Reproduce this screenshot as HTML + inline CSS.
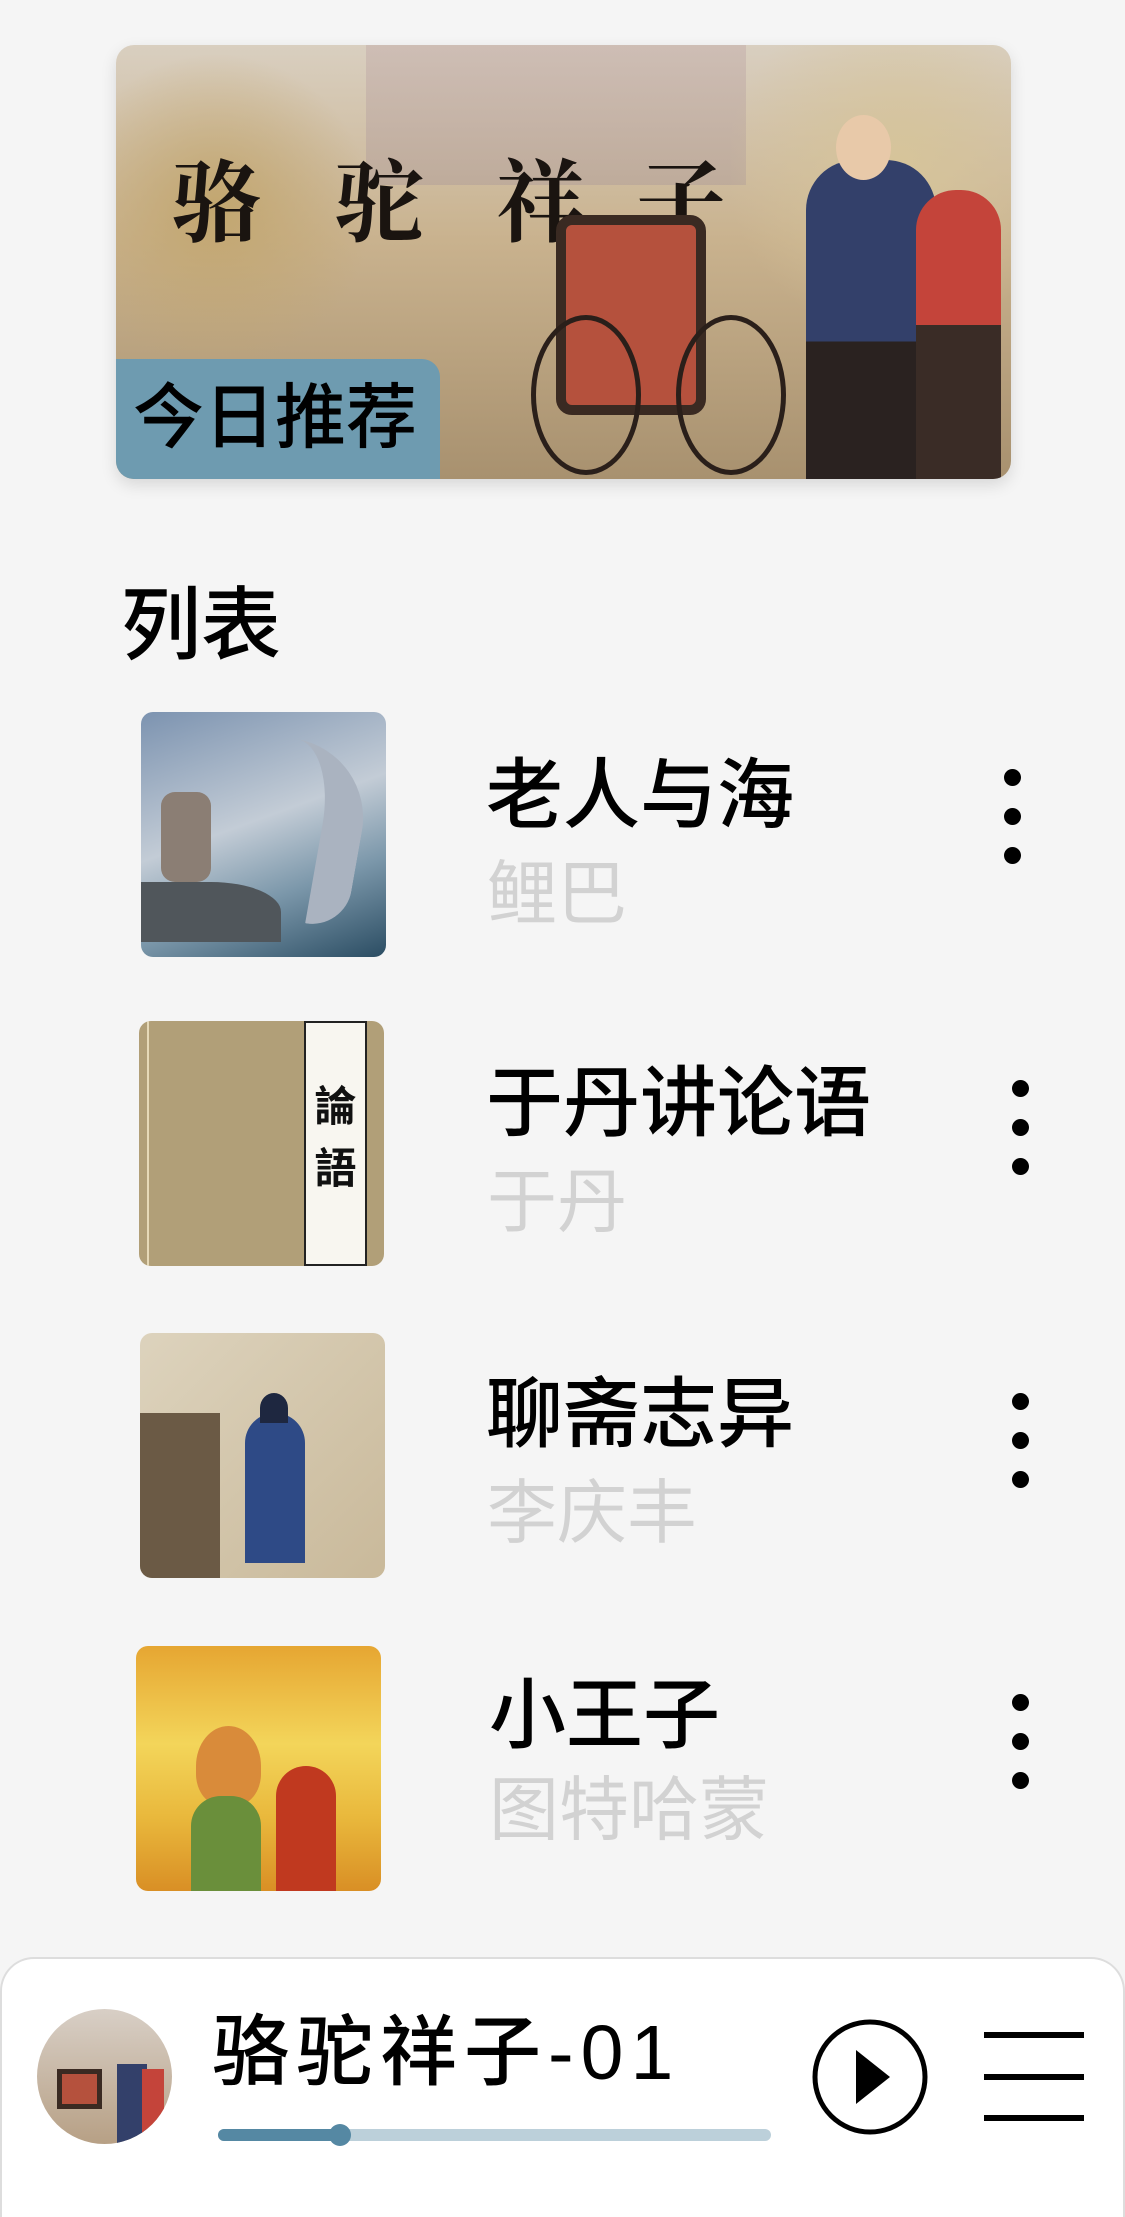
<!DOCTYPE html>
<html><head><meta charset="utf-8"><style>
*{margin:0;padding:0;box-sizing:border-box}
body{width:1125px;height:2209px;background:#f5f5f5;position:relative;overflow:hidden;font-family:"Liberation Sans","Noto Sans CJK SC",sans-serif}
.banner{position:absolute;left:116px;top:45px;width:895px;height:434px;border-radius:18px;overflow:hidden;box-shadow:0 6px 16px rgba(0,0,0,.12);background:linear-gradient(180deg,#d9cfc0 0%,#c9b28e 45%,#a8916f 100%)}
.badge{position:absolute;left:0;bottom:0;width:324px;height:120px;background:#6e9bb0;border-top-right-radius:18px;font-size:71px;line-height:120px;padding-left:17px;color:#000;font-weight:500}
.cal{position:absolute;top:85px;font-family:"Noto Serif CJK SC",serif;font-size:90px;color:#1a1410;font-weight:bold}
.h{position:absolute;left:121px;top:578px;font-size:80px;line-height:96px;color:#000;font-weight:500}
.thumb{position:absolute;width:245px;height:245px;border-radius:12px;overflow:hidden}
.t{position:absolute;left:486px;font-size:77px;line-height:86px;color:#000;font-weight:500}
.s{position:absolute;left:487px;font-size:70px;line-height:76px;color:#d2d2d2}
.dots{position:absolute;width:17px}
.dots i{display:block;width:17px;height:17px;border-radius:50%;background:#000;margin-bottom:22px}
.bar{position:absolute;left:0;top:1957px;width:1125px;height:260px;background:#fff;border:2px solid #ddd;border-bottom:none;border-radius:34px 34px 0 0}
</style></head><body>
<div class="banner">
  <div style="position:absolute;left:250px;top:0;width:380px;height:140px;background:linear-gradient(#c9b6b0,#b8a59a);opacity:.7"></div>
  <div style="position:absolute;left:0;top:0;width:250px;height:330px;background:radial-gradient(circle at 40% 50%,#c2a66f,transparent 70%)"></div>
  <div style="position:absolute;right:0;top:0;width:280px;height:300px;background:radial-gradient(circle at 60% 40%,#d6c49a,transparent 70%)"></div>
  <div class="cal" style="left:55px">骆</div><div class="cal" style="left:218px">驼</div><div class="cal" style="left:380px">祥</div><div class="cal" style="left:520px">子</div>
  <div style="position:absolute;left:440px;top:170px;width:150px;height:200px;background:#b5513d;border-radius:16px;border:10px solid #3a2a22"></div>
  <div style="position:absolute;left:415px;top:270px;width:110px;height:160px;border:5px solid #2a1f1a;border-radius:50%"></div>
  <div style="position:absolute;left:560px;top:270px;width:110px;height:160px;border:5px solid #2a1f1a;border-radius:50%"></div>
  <div style="position:absolute;left:690px;top:115px;width:130px;height:330px;background:linear-gradient(#33406a 0 55%,#2a2220 55%);border-radius:50px 50px 0 0"></div>
  <div style="position:absolute;left:720px;top:70px;width:55px;height:65px;background:#e8c9a9;border-radius:50%"></div>
  <div style="position:absolute;left:800px;top:145px;width:85px;height:300px;background:linear-gradient(#c4443a 0 45%,#3a2c26 45%);border-radius:40px 40px 0 0"></div>
  <div class="badge">今日推荐</div>
</div>
<div class="h">列表</div>

<div class="thumb" style="left:141px;top:712px;background:linear-gradient(160deg,#7c93b0 0%,#c3ccd6 45%,#7b97aa 70%,#2b4d63 100%)">
  <div style="position:absolute;left:110px;top:30px;width:110px;height:180px;border-right:40px solid #aab3c0;border-radius:0 80px 40px 0;transform:rotate(10deg)"></div>
  <div style="position:absolute;left:20px;top:80px;width:50px;height:90px;background:#8b7e74;border-radius:14px"></div>
  <div style="position:absolute;left:0;top:170px;width:140px;height:60px;background:#50565b;border-radius:0 50% 0 0"></div>
</div>
<div class="t" style="top:753px">老人与海</div><div class="s" style="top:856px">鲤巴</div>
<div class="dots" style="left:1004px;top:769px"><i></i><i></i><i></i></div>

<div class="thumb" style="left:139px;top:1021px;background:#b19f78">
  <div style="position:absolute;left:165px;top:0;width:63px;height:245px;background:#f8f6f0;border:2px solid #222;font-family:'Noto Sans CJK SC',sans-serif;font-weight:bold;font-size:42px;line-height:62px;text-align:center;padding-top:50px;color:#111">論<br>語</div>
  <div style="position:absolute;left:8px;top:0;width:2px;height:245px;background:#e6d9b8"></div>
</div>
<div class="t" style="top:1061px">于丹讲论语</div><div class="s" style="top:1164px">于丹</div>
<div class="dots" style="left:1012px;top:1080px"><i></i><i></i><i></i></div>

<div class="thumb" style="left:140px;top:1333px;background:linear-gradient(135deg,#ddd3bd,#c9b99a)">
  <div style="position:absolute;left:0;top:80px;width:80px;height:165px;background:#6b5a45"></div>
  <div style="position:absolute;left:105px;top:80px;width:60px;height:150px;background:#2e4a86;border-radius:30px 30px 0 0"></div>
  <div style="position:absolute;left:120px;top:60px;width:28px;height:30px;background:#1e2740;border-radius:50% 50% 0 0"></div>
</div>
<div class="t" style="top:1372px">聊斋志异</div><div class="s" style="top:1475px">李庆丰</div>
<div class="dots" style="left:1012px;top:1393px"><i></i><i></i><i></i></div>

<div class="thumb" style="left:136px;top:1646px;background:linear-gradient(180deg,#e6a632 0%,#f3d55a 40%,#e9b83c 70%,#d98f25 100%)">
  <div style="position:absolute;left:60px;top:80px;width:65px;height:80px;background:#d98b3a;border-radius:50% 50% 40% 40%"></div>
  <div style="position:absolute;left:55px;top:150px;width:70px;height:95px;background:#6a8f3b;border-radius:30px 30px 0 0"></div>
  <div style="position:absolute;left:140px;top:120px;width:60px;height:125px;background:#c0391f;border-radius:30px 30px 0 0"></div>
</div>
<div class="t" style="top:1673px;left:489px">小王子</div><div class="s" style="top:1772px;left:489px">图特哈蒙</div>
<div class="dots" style="left:1012px;top:1694px"><i></i><i></i><i></i></div>

<div class="bar"></div>
<div style="position:absolute;left:37px;top:2009px;width:135px;height:135px;border-radius:50%;overflow:hidden;background:linear-gradient(#d8cfc6,#b7a085)">
  <div style="position:absolute;left:20px;top:60px;width:45px;height:40px;background:#b5513d;border:5px solid #3a2a22"></div>
  <div style="position:absolute;left:80px;top:55px;width:30px;height:80px;background:#33406a"></div>
  <div style="position:absolute;left:105px;top:60px;width:22px;height:70px;background:#c4443a"></div>
</div>
<div style="position:absolute;left:212px;top:2008px;font-size:77px;line-height:90px;letter-spacing:7px;color:#000;font-weight:500">骆驼祥子-01</div>
<div style="position:absolute;left:218px;top:2129px;width:553px;height:12px;border-radius:6px;background:#bcd0da"></div>
<div style="position:absolute;left:218px;top:2129px;width:122px;height:12px;border-radius:6px;background:#5588a3"></div>
<div style="position:absolute;left:329px;top:2124px;width:22px;height:22px;border-radius:50%;background:#5588a3"></div>
<svg style="position:absolute;left:810px;top:2017px" width="120" height="120" viewBox="0 0 120 120"><circle cx="60" cy="60" r="55" fill="none" stroke="#000" stroke-width="5"/><path d="M46 33 L80 60 L46 87 Z" fill="#000"/></svg>
<div style="position:absolute;left:984px;top:2032px;width:100px;height:6px;background:#000"></div>
<div style="position:absolute;left:984px;top:2074px;width:100px;height:6px;background:#000"></div>
<div style="position:absolute;left:984px;top:2115px;width:100px;height:6px;background:#000"></div>
</body></html>
